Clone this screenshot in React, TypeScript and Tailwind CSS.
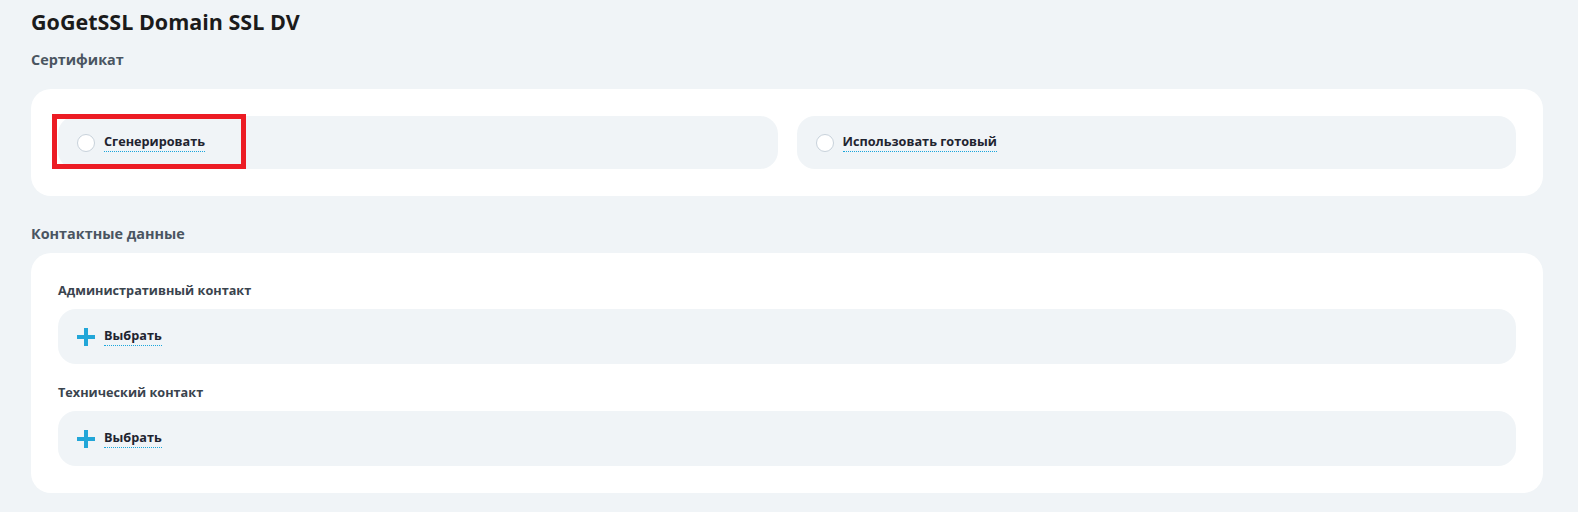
import React from "react";

const font = { fontFamily: '"Open Sans", "Noto Sans", sans-serif' };

const Radio: React.FC<{ label: string }> = ({ label }) => (
  <div className="flex items-center h-[53px] rounded-[18px] bg-[#f0f4f7] pl-[19px]">
    <span className="w-[18px] h-[18px] rounded-full border border-[#c8d2db] bg-white shrink-0" />
    <span className="ml-[9px] text-[12.7px] leading-[17px] font-bold text-[#1f2430] border-b border-dotted border-[#1ba6dc] pb-[1px]">
      {label}
    </span>
  </div>
);

const PlusIcon = () => (
  <svg width="18" height="18" viewBox="0 0 18 18" className="shrink-0">
    <rect x="7" y="0" width="4" height="18" fill="#22a6d8" />
    <rect x="0" y="7" width="18" height="4" fill="#22a6d8" />
  </svg>
);

const ContactRow: React.FC<{ title: string; first?: boolean }> = ({ title, first }) => (
  <div className={first ? "" : "mt-[18px]"}>
    <div className="text-[12.7px] leading-[20px] font-bold text-[#3a444e]">{title}</div>
    <div className="mt-[9px] flex items-center h-[55px] rounded-[18px] bg-[#f0f4f7] pl-[19px]">
      <PlusIcon />
      <span className="ml-[9px] text-[12.7px] leading-[17px] font-bold text-[#1f2430] border-b border-dotted border-[#1ba6dc] pb-[1px]">
        Выбрать
      </span>
    </div>
  </div>
);

export default function App() {
  return (
    <div className="min-h-[512px] bg-[#f0f4f7] pt-[8px] pl-[31px] pr-[35px] pb-[19px]" style={font}>
      <h1 className="text-[21.5px] leading-[28px] font-bold text-[#1b1b1b]">GoGetSSL Domain SSL DV</h1>
      <div className="mt-[14px] text-[14.4px] leading-[20px] font-bold text-[#4a5561]">Сертификат</div>

      <div className="relative mt-[19px] bg-white rounded-[20px] p-[27px] grid grid-cols-2 gap-[19px]">
        <Radio label="Сгенерировать" />
        <Radio label="Использовать готовый" />
        <div className="absolute left-[21px] top-[25px] w-[194px] h-[55px] border-[5px] border-[#ec1c24]" />
      </div>

      <div className="mt-[28px] text-[14.4px] leading-[20px] font-bold text-[#4a5561]">Контактные данные</div>

      <div className="mt-[9px] bg-white rounded-[20px] pt-[27px] px-[27px] pb-[27px]">
        <ContactRow title="Административный контакт" first />
        <ContactRow title="Технический контакт" />
      </div>
    </div>
  );
}
